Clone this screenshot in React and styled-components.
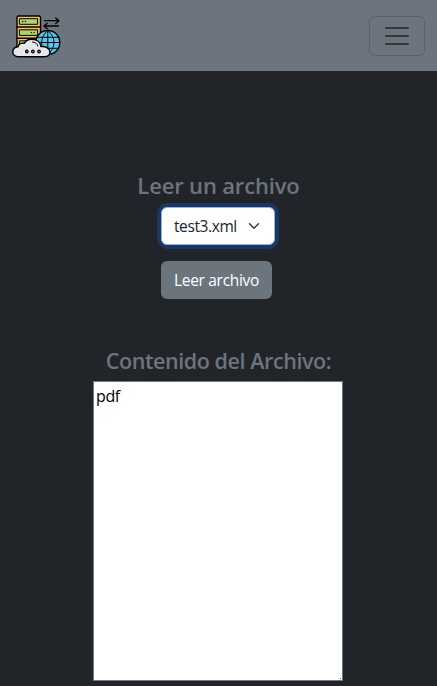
import React from "react";
import styled, { createGlobalStyle } from "styled-components";

const GlobalStyle = createGlobalStyle`
  *, *::before, *::after { box-sizing: border-box; }
  body {
    margin: 0;
    min-height: 100vh;
    overflow: hidden;
    background: #212529;
    font-family: "Segoe UI", "Open Sans", "Noto Sans", sans-serif;
    font-size: 16px;
    line-height: 24px;
  }
`;

const Navbar = styled.nav`
  display: flex;
  align-items: center;
  justify-content: space-between;
  height: 71px;
  padding: 0 12px;
  background: #6c757d;
`;

const Logo = styled.svg`
  display: block;
  width: 50px;
  height: 50px;
`;

const Toggler = styled.button`
  display: grid;
  place-items: center;
  width: 56px;
  height: 40px;
  padding: 0;
  border: 1px solid rgba(0, 0, 0, 0.15);
  border-radius: 6px;
  background: transparent;
`;

const Bars = styled.svg`
  width: 30px;
  height: 30px;
`;

const Main = styled.main`
  display: flex;
  flex-direction: column;
  align-items: center;
  padding-top: 100px;
`;

const Title = styled.h4`
  margin: 0;
  height: 29px;
  line-height: ${(p) => p.$leading || "29px"};
  font-size: ${(p) => p.$size};
  font-weight: 600;
  letter-spacing: ${(p) => p.$spacing};
  white-space: nowrap;
  color: #6c757d;
`;

const Form = styled.form`
  display: flex;
  flex-direction: column;
  gap: 16px;
  width: 115px;
  margin: 7px 0 47px;
`;

const SelectField = styled.div`
  display: flex;
  align-items: center;
  justify-content: space-between;
  width: 114px;
  height: 38px;
  padding: 0 12px;
  border: 1px solid #86b7fe;
  border-radius: 6px;
  background: #fff;
  color: #212529;
  box-shadow: 0 0 0 4px rgba(13, 110, 253, 0.25);
  font-size: 15.5px;
  letter-spacing: -0.4px;
`;

const Chevron = styled.svg`
  width: 16px;
  height: 12px;
`;

const Submit = styled.button`
  width: 111px;
  height: 38px;
  padding: 0;
  border: 0;
  border-radius: 6px;
  background: #6c757d;
  color: #fff;
  font: inherit;
  font-size: 15.5px;
  letter-spacing: -0.3px;
  white-space: nowrap;
`;

const ContentFrame = styled.div`
  position: relative;
  width: 250px;
  height: 300px;
  margin: 6px 1px 0 0;

  &::after {
    content: "";
    position: absolute;
    right: 2px;
    bottom: 2px;
    width: 1px;
    height: 1px;
    background: #444;
  }
`;

const Content = styled.textarea`
  display: block;
  width: 100%;
  height: 100%;
  margin: 0;
  padding: 2px;
  border: 1px solid #767676;
  border-radius: 0;
  background: #fff;
  color: #000;
  font: inherit;
  letter-spacing: -0.4px;
  resize: none;
  outline: 0;
`;

function ServerLogo() {
  return (
    <Logo viewBox="0 0 50 50" fill="none" stroke="#000" strokeWidth="1.4" strokeLinecap="round" strokeLinejoin="round">
      <rect x="5" y="5" width="23.5" height="35" rx="1.5" fill="#f6c35f" />
      <path d="M5 16h23.5M5 27.2h23.5" />
      <g fill="#a9d46b" strokeWidth="1">
        <rect x="7.8" y="7.7" width="17.8" height="5.6" />
        <rect x="7.8" y="18.8" width="17.8" height="5.6" />
        <rect x="7.8" y="29.8" width="17.8" height="5.6" />
      </g>
      <path d="M10.7 10.5h.1M13.4 10.5h.1M19.3 21.6h.1M22 21.6h.1M10.7 32.3h.1" strokeWidth="1.3" />
      <path d="M32.5 9.7H47M43.7 6.9l3.3 2.8-3.3 2.8M46.5 15H32M35.2 12.2L32 15l3.2 2.8" strokeWidth="1.3" />
      <circle cx="35.8" cy="31.5" r="12" fill="#58c6ed" />
      <path d="M35.8 19.5v24M25 26.3h21.6M24 31.5h23.6M25 37.3h21.6M35.8 19.5c-8.3 6.9-8.3 17.1 0 24M35.8 19.5c8.3 6.9 8.3 17.1 0 24" strokeWidth="1" />
      <path d="M6.4 45.8C2.8 45.8.8 43.6.8 40.9c0-2.8 2.2-5 5.2-5.2 1-2.8 3.4-3.9 6.2-3.4 1.6-2.7 4.5-4.2 8-4 5 .2 8.4 3.3 8.8 7.3 5-.3 8.9 1.7 8.9 5.5 0 2.9-2.2 4.7-5.4 4.7H6.4Z" fill="#e6e7ed" />
      <path d="M20.5 31c2.8.1 4.6 1.6 5.4 4" strokeWidth="1" />
      <g fill="#d85a50" strokeWidth="1.1">
        <circle cx="14.8" cy="40.5" r="1.35" />
        <circle cx="20.9" cy="40.5" r="1.35" />
        <circle cx="27" cy="40.5" r="1.35" />
      </g>
    </Logo>
  );
}

export default function App() {
  return (
    <>
      <GlobalStyle />
      <Navbar>
        <ServerLogo />
        <Toggler aria-label="Menú">
          <Bars viewBox="0 0 30 30">
            <path d="M4 7h22M4 15h22M4 23h22" stroke="rgba(33,37,41,.75)" strokeWidth="2" strokeLinecap="round" strokeMiterlimit="10" />
          </Bars>
        </Toggler>
      </Navbar>
      <Main>
        <Title $size="22px" $spacing="-0.16px">Leer un archivo</Title>
        <Form>
          <SelectField role="combobox" tabIndex={0}>
            test3.xml
            <Chevron viewBox="0 0 16 16" fill="none" stroke="#343a40" strokeWidth="2" strokeLinecap="round" strokeLinejoin="round">
              <path d="m2 5 6 6 6-6" />
            </Chevron>
          </SelectField>
          <Submit type="button">Leer archivo</Submit>
        </Form>
        <Title $size="21.5px" $leading="30px" $spacing="-0.42px">Contenido del Archivo:</Title>
        <ContentFrame>
          <Content defaultValue="pdf" spellCheck={false} />
        </ContentFrame>
      </Main>
    </>
  );
}
